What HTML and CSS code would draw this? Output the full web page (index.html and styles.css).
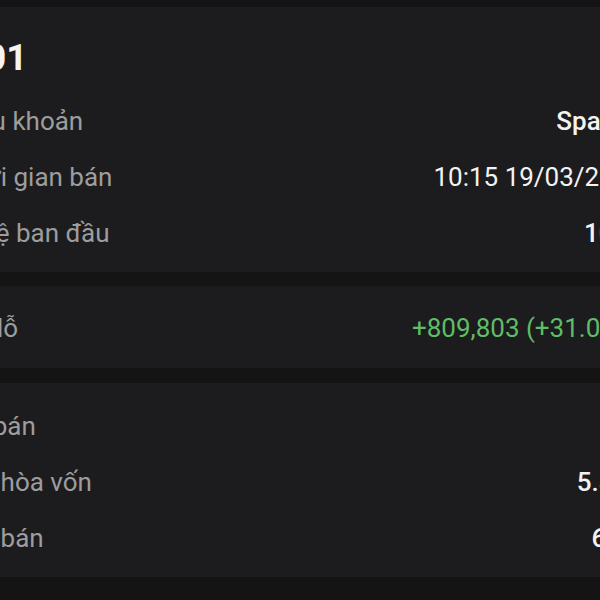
FILE: index.html
```html
<!DOCTYPE html>
<html lang="vi">
<head>
<meta charset="utf-8">
<title>Chi tiết lệnh</title>
<link rel="stylesheet" href="styles.css">
</head>
<body>
<main class="screen">
  <section class="card card-first">
    <h1 class="title">01</h1>
    <div class="row"><span class="label">Tiểu khoản</span><span class="value">Space1</span></div>
    <div class="row"><span class="label">Thời gian bán</span><span class="value value-regular">10:15 19/03/2025</span></div>
    <div class="row"><span class="label">Tỷ lệ ban đầu</span><span class="value">1000</span></div>
  </section>
  <section class="card card-mid">
    <div class="row"><span class="label">Lãi lỗ</span><span class="value value-regular positive">+809,803 (+31.05%)</span></div>
  </section>
  <section class="card card-last">
    <div class="row"><span class="label">KL bán</span><span class="value"></span></div>
    <div class="row"><span class="label">Giá hòa vốn</span><span class="value">5.880</span></div>
    <div class="row"><span class="label">Giá bán</span><span class="value">6.25</span></div>
  </section>
</main>
</body>
</html>
```

FILE: styles.css
```css
html, body {
  margin: 0;
  padding: 0;
  background: #141414;
  overflow: hidden;
  height: 600px;
}

body {
  font-family: Roboto, "Noto Sans", "Liberation Sans", sans-serif;
  -webkit-font-smoothing: antialiased;
}

.screen {
  width: 687px;
  margin-left: -44px;
  padding-top: 7px;
  display: flex;
  flex-direction: column;
}

.card {
  background: #1c1c1e;
  display: flex;
  flex-direction: column;
}

.card-first {
  padding: 16px 0 11px;
}

.card-mid {
  margin-top: 14px;
  padding: 14px 0 12px;
}

.card-last {
  margin-top: 15px;
  padding: 15px 0 11px;
}

.title {
  margin: 0 0 0 29px;
  font-size: 37px;
  line-height: 70px;
  font-weight: 700;
  color: #f4f4f4;
}

.row {
  display: flex;
  justify-content: space-between;
  align-items: center;
  height: 56px;
  font-size: 26px;
  line-height: 56px;
  white-space: nowrap;
}

.label {
  color: #9d9d9f;
  font-weight: 400;
}

.value {
  color: #f2f2f2;
  font-weight: 500;
}

.value-regular {
  font-weight: 400;
}

.positive {
  color: #5fbd66;
}
```
